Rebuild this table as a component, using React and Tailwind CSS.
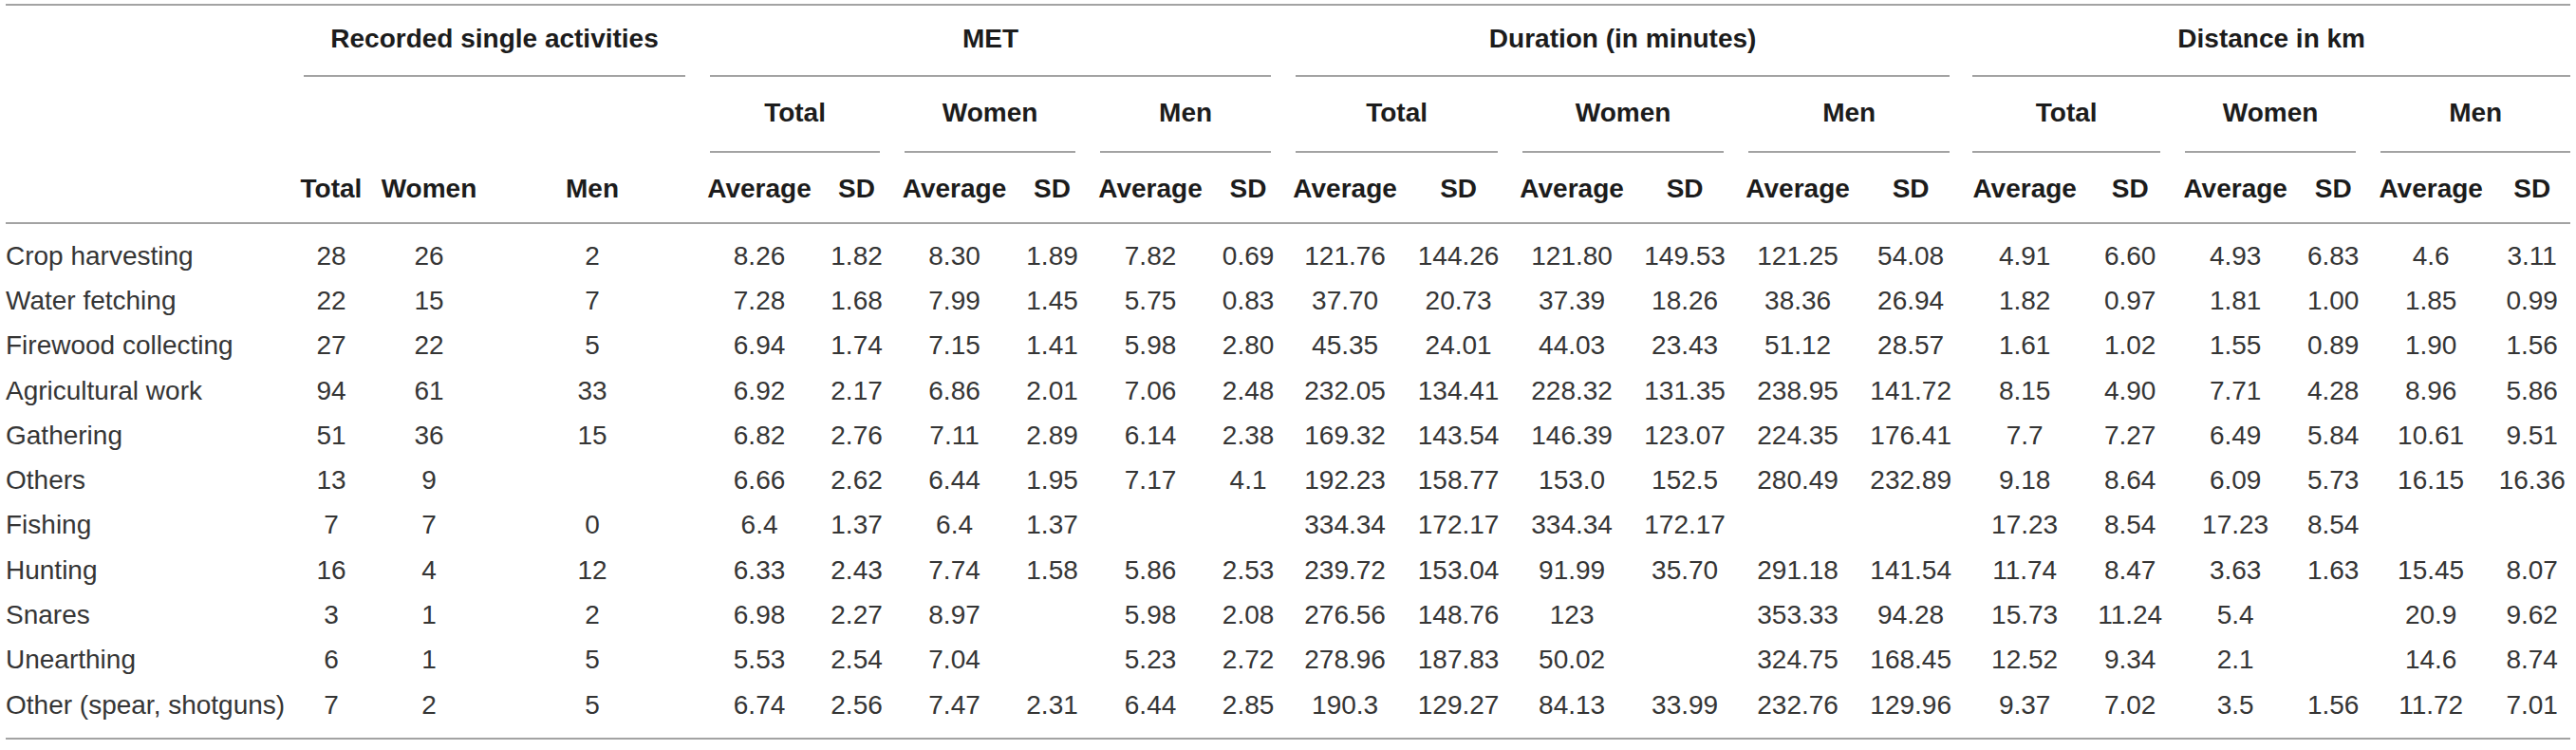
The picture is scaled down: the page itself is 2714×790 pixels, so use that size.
import React from "react";

// column widths, left to right (label + 21 value columns)
const colWidths = [
  "w-[301px]", "w-[84px]", "w-[122px]", "w-[222px]",
  "w-[130px]", "w-[75px]", "w-[131px]", "w-[75px]", "w-[132px]", "w-[74px]",
  "w-[130px]", "w-[109px]", "w-[130px]", "w-[108px]", "w-[130px]", "w-[108px]",
  "w-[132px]", "w-[90px]", "w-[132px]", "w-[74px]", "w-[132px]", "w-[81px]",
];

const rows = [
  ["Crop harvesting", "28", "26", "2", "8.26", "1.82", "8.30", "1.89", "7.82", "0.69", "121.76", "144.26", "121.80", "149.53", "121.25", "54.08", "4.91", "6.60", "4.93", "6.83", "4.6", "3.11"],
  ["Water fetching", "22", "15", "7", "7.28", "1.68", "7.99", "1.45", "5.75", "0.83", "37.70", "20.73", "37.39", "18.26", "38.36", "26.94", "1.82", "0.97", "1.81", "1.00", "1.85", "0.99"],
  ["Firewood collecting", "27", "22", "5", "6.94", "1.74", "7.15", "1.41", "5.98", "2.80", "45.35", "24.01", "44.03", "23.43", "51.12", "28.57", "1.61", "1.02", "1.55", "0.89", "1.90", "1.56"],
  ["Agricultural work", "94", "61", "33", "6.92", "2.17", "6.86", "2.01", "7.06", "2.48", "232.05", "134.41", "228.32", "131.35", "238.95", "141.72", "8.15", "4.90", "7.71", "4.28", "8.96", "5.86"],
  ["Gathering", "51", "36", "15", "6.82", "2.76", "7.11", "2.89", "6.14", "2.38", "169.32", "143.54", "146.39", "123.07", "224.35", "176.41", "7.7", "7.27", "6.49", "5.84", "10.61", "9.51"],
  ["Others", "13", "9", "", "6.66", "2.62", "6.44", "1.95", "7.17", "4.1", "192.23", "158.77", "153.0", "152.5", "280.49", "232.89", "9.18", "8.64", "6.09", "5.73", "16.15", "16.36"],
  ["Fishing", "7", "7", "0", "6.4", "1.37", "6.4", "1.37", "", "", "334.34", "172.17", "334.34", "172.17", "", "", "17.23", "8.54", "17.23", "8.54", "", ""],
  ["Hunting", "16", "4", "12", "6.33", "2.43", "7.74", "1.58", "5.86", "2.53", "239.72", "153.04", "91.99", "35.70", "291.18", "141.54", "11.74", "8.47", "3.63", "1.63", "15.45", "8.07"],
  ["Snares", "3", "1", "2", "6.98", "2.27", "8.97", "", "5.98", "2.08", "276.56", "148.76", "123", "", "353.33", "94.28", "15.73", "11.24", "5.4", "", "20.9", "9.62"],
  ["Unearthing", "6", "1", "5", "5.53", "2.54", "7.04", "", "5.23", "2.72", "278.96", "187.83", "50.02", "", "324.75", "168.45", "12.52", "9.34", "2.1", "", "14.6", "8.74"],
  ["Other (spear, shotguns)", "7", "2", "5", "6.74", "2.56", "7.47", "2.31", "6.44", "2.85", "190.3", "129.27", "84.13", "33.99", "232.76", "129.96", "9.37", "7.02", "3.5", "1.56", "11.72", "7.01"],
];

const line = "border-b-2 border-[#a3a3a3]";

function GroupHead({ span, label, inset = "mx-[13px]" }) {
  return (
    <th colSpan={span} className="p-0 font-bold">
      <div className={`flex h-[75px] items-center justify-center pb-[4px] ${inset} ${line}`}>
        {label}
      </div>
    </th>
  );
}

function SubHead({ label, inset = "mx-[13px]" }) {
  return (
    <th colSpan={2} className="p-0 font-bold">
      <div className={`flex h-[80px] items-center justify-center pb-[2px] ${inset} ${line}`}>
        {label}
      </div>
    </th>
  );
}

function ColHead({ label }) {
  return (
    <th className="p-0 font-bold">
      <div className="flex h-[73px] items-center justify-center pt-[3px]">{label}</div>
    </th>
  );
}

export default function App() {
  const stats = ["Average", "SD", "Average", "SD", "Average", "SD", "Average", "SD", "Average", "SD", "Average", "SD", "Average", "SD", "Average", "SD", "Average", "SD"];

  return (
    <div className="min-h-[790px] bg-white px-[6px] pt-[4px] font-['Liberation_Sans',Arial,sans-serif] text-[28px] leading-none text-[#222]">
      <table className="w-[2702px] table-fixed border-collapse">
        <colgroup>
          {colWidths.map((w, i) => (
            <col key={i} className={w} />
          ))}
        </colgroup>
        <thead className="border-t-2 border-b-2 border-[#a3a3a3] text-[#1c1c1c]">
          <tr>
            <th rowSpan={3} className="p-0" />
            <GroupHead span={3} label="Recorded single activities" />
            <GroupHead span={6} label="MET" />
            <GroupHead span={6} label="Duration (in minutes)" />
            <GroupHead span={6} label="Distance in km" inset="ml-[11px] mr-0" />
          </tr>
          <tr>
            <th colSpan={3} className="p-0" />
            <SubHead label="Total" />
            <SubHead label="Women" />
            <SubHead label="Men" />
            <SubHead label="Total" />
            <SubHead label="Women" />
            <SubHead label="Men" />
            <SubHead label="Total" inset="ml-[11px] mr-[13px]" />
            <SubHead label="Women" />
            <SubHead label="Men" inset="ml-[13px] mr-0" />
          </tr>
          <tr>
            <ColHead label="Total" />
            <ColHead label="Women" />
            <ColHead label="Men" />
            {stats.map((s, i) => (
              <ColHead key={i} label={s} />
            ))}
          </tr>
        </thead>
        <tbody className="border-b-2 border-[#a3a3a3] text-[#353535]">
          <tr className="h-[11px]">
            <td colSpan={22} className="p-0" />
          </tr>
          {rows.map((r) => (
            <tr key={r[0]} className="h-[47.3px]">
              {r.map((v, i) => (
                <td
                  key={i}
                  className={i === 0 ? "whitespace-nowrap p-0 text-left" : "whitespace-nowrap p-0 text-center"}
                >
                  {v}
                </td>
              ))}
            </tr>
          ))}
          <tr className="h-[12px]">
            <td colSpan={22} className="p-0" />
          </tr>
        </tbody>
      </table>
    </div>
  );
}
